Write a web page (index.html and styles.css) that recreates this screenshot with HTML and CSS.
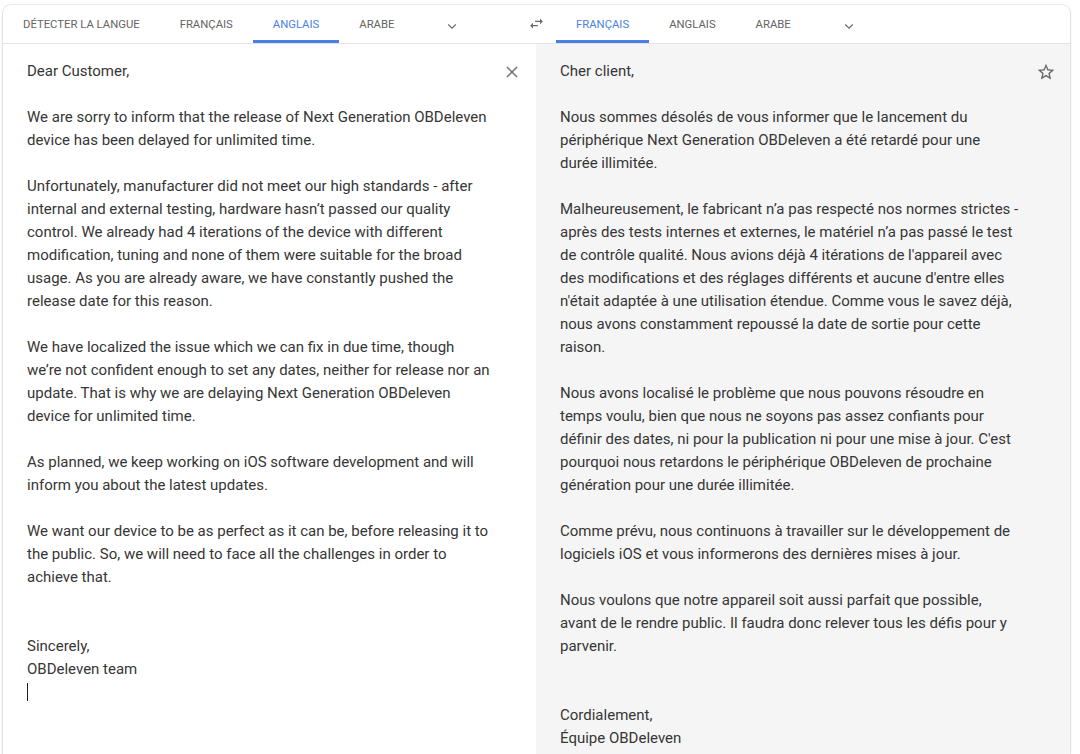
FILE: index.html
```html
<!DOCTYPE html>
<html lang="fr">
<head>
<meta charset="utf-8">
<title>Traduction</title>
<link rel="stylesheet" href="styles.css">
</head>
<body>
<div class="card">
  <div class="lang-header">
    <div class="lang-bar lang-bar-source">
      <span class="tab">DÉTECTER LA LANGUE</span>
      <span class="tab">FRANÇAIS</span>
      <span class="tab tab-active">ANGLAIS</span>
      <span class="tab">ARABE</span>
      <span class="tab-more">
        <svg viewBox="0 0 24 24" class="icon-chevron"><polyline points="7,10 12,15 17,10"/></svg>
      </span>
    </div>
    <div class="swap">
      <svg viewBox="0 0 24 24" class="icon-swap"><path d="M6.99 11L3 15l3.99 4v-3H14v-2H6.99v-3zM21 9l-3.99-4v3H10v2h7.01v3L21 9z"/></svg>
    </div>
    <div class="lang-bar lang-bar-target">
      <span class="tab tab-active">FRANÇAIS</span>
      <span class="tab">ANGLAIS</span>
      <span class="tab">ARABE</span>
      <span class="tab-more">
        <svg viewBox="0 0 24 24" class="icon-chevron"><polyline points="7,10 12,15 17,10"/></svg>
      </span>
    </div>
  </div>

  <div class="panels">
    <div class="panel panel-source">
      <div class="text">
        <p>Dear Customer,</p>
        <p>We are sorry to inform that the release of Next Generation OBDeleven<br>device has been delayed for unlimited time.</p>
        <p>Unfortunately, manufacturer did not meet our high standards - after<br>internal and external testing, hardware hasn’t passed our quality<br>control. We already had 4 iterations of the device with different<br>modification, tuning and none of them were suitable for the broad<br>usage. As you are already aware, we have constantly pushed the<br>release date for this reason.</p>
        <p>We have localized the issue which we can fix in due time, though<br>we’re not confident enough to set any dates, neither for release nor an<br>update. That is why we are delaying Next Generation OBDeleven<br>device for unlimited time.</p>
        <p>As planned, we keep working on iOS software development and will<br>inform you about the latest updates.</p>
        <p class="gap-2">We want our device to be as perfect as it can be, before releasing it to<br>the public. So, we will need to face all the challenges in order to<br>achieve that.</p>
        <p>Sincerely,<br>OBDeleven team<br><span class="caret"></span></p>
      </div>
      <button class="icon-btn" type="button" aria-label="Effacer">
        <svg viewBox="0 0 24 24" class="icon-close"><path d="M6 6L18 18M18 6L6 18"/></svg>
      </button>
    </div>
    <div class="panel panel-target">
      <div class="text">
        <p>Cher client,</p>
        <p>Nous sommes désolés de vous informer que le lancement du<br>périphérique Next Generation OBDeleven a été retardé pour une<br>durée illimitée.</p>
        <p>Malheureusement, le fabricant n’a pas respecté nos normes strictes -<br>après des tests internes et externes, le matériel n’a pas passé le test<br>de contrôle qualité. Nous avions déjà 4 itérations de l'appareil avec<br>des modifications et des réglages différents et aucune d'entre elles<br>n'était adaptée à une utilisation étendue. Comme vous le savez déjà,<br>nous avons constamment repoussé la date de sortie pour cette<br>raison.</p>
        <p>Nous avons localisé le problème que nous pouvons résoudre en<br>temps voulu, bien que nous ne soyons pas assez confiants pour<br>définir des dates, ni pour la publication ni pour une mise à jour. C'est<br>pourquoi nous retardons le périphérique OBDeleven de prochaine<br>génération pour une durée illimitée.</p>
        <p>Comme prévu, nous continuons à travailler sur le développement de<br>logiciels iOS et vous informerons des dernières mises à jour.</p>
        <p class="gap-2">Nous voulons que notre appareil soit aussi parfait que possible,<br>avant de le rendre public. Il faudra donc relever tous les défis pour y<br>parvenir.</p>
        <p>Cordialement,<br>Équipe OBDeleven</p>
      </div>
      <button class="icon-btn" type="button" aria-label="Enregistrer">
        <svg viewBox="0 0 24 24" class="icon-star"><path d="M22 9.24l-7.19-.62L12 2 9.19 8.63 2 9.24l5.46 4.73L5.82 21 12 17.27 18.18 21l-1.63-7.03L22 9.24zM12 15.4l-3.76 2.27 1-4.28-3.32-2.88 4.38-.38L12 6.1l1.71 4.04 4.38.38-3.32 2.88 1 4.28L12 15.4z"/></svg>
      </button>
    </div>
  </div>
</div>
</body>
</html>
```

FILE: styles.css
```css
html, body {
  margin: 0;
  padding: 0;
  height: 100%;
  background: #ffffff;
  overflow: hidden;
}

body {
  font-family: Roboto, "Liberation Sans", Arial, sans-serif;
  color: #363636;
  padding: 5px 10px 0 3px;
  box-sizing: border-box;
}

.card {
  height: 100%;
  display: flex;
  flex-direction: column;
  background: #ffffff;
  border-radius: 8px 8px 0 0;
  box-shadow: 0 0 0 1px rgba(0, 0, 0, 0.06), 0 1px 3px rgba(0, 0, 0, 0.16);
  overflow: hidden;
}

/* Language selector row */
.lang-header {
  display: flex;
  height: 38px;
  border-bottom: 1px solid #e3e3e3;
  flex-shrink: 0;
}

.lang-bar {
  display: flex;
  align-items: stretch;
}

.lang-bar-source {
  width: 513px;
}

.lang-bar-target {
  flex: 1;
}

.tab {
  display: flex;
  align-items: center;
  padding: 4px 20px 0;
  font-size: 11.3px;
  font-weight: 400;
  color: #646464;
  border-bottom: 3px solid transparent;
  white-space: nowrap;
}

.tab-active {
  color: #4a80e6;
  border-bottom-color: #4a80e6;
}

.tab-more {
  display: flex;
  align-items: center;
  justify-content: center;
  width: 76px;
  padding-top: 3px;
}

.icon-chevron {
  width: 18px;
  height: 18px;
  fill: none;
  stroke: #6b6b6b;
  stroke-width: 1.6;
}

.swap {
  width: 40px;
  display: flex;
  align-items: center;
  justify-content: center;
  padding-bottom: 1px;
}

.icon-swap {
  width: 17px;
  height: 17px;
  fill: #6b6b6b;
}

/* Source and translation panels */
.panels {
  flex: 1;
  display: flex;
}

.panel {
  display: flex;
  justify-content: space-between;
  align-items: flex-start;
  padding: 16px 12px 0 24px;
}

.panel-source {
  width: 533px;
  box-sizing: border-box;
  background: #ffffff;
}

.panel-target {
  flex: 1;
  background: #f5f5f5;
}

.text {
  font-size: 15px;
  line-height: 23px;
  white-space: nowrap;
}

.text p {
  margin: 0 0 23px;
}

.text p.gap-2 {
  margin-bottom: 46px;
}

.caret {
  display: inline-block;
  width: 1px;
  height: 18px;
  background: #222222;
  vertical-align: -4px;
}

.icon-btn {
  border: 0;
  background: transparent;
  padding: 0;
  margin: 0;
  width: 24px;
  height: 24px;
  display: flex;
  align-items: center;
  justify-content: center;
}

.icon-close {
  width: 20px;
  height: 20px;
  fill: none;
  stroke: #6e6e6e;
  stroke-width: 1.7;
}

.icon-star {
  width: 20px;
  height: 20px;
  fill: #666666;
}
```
